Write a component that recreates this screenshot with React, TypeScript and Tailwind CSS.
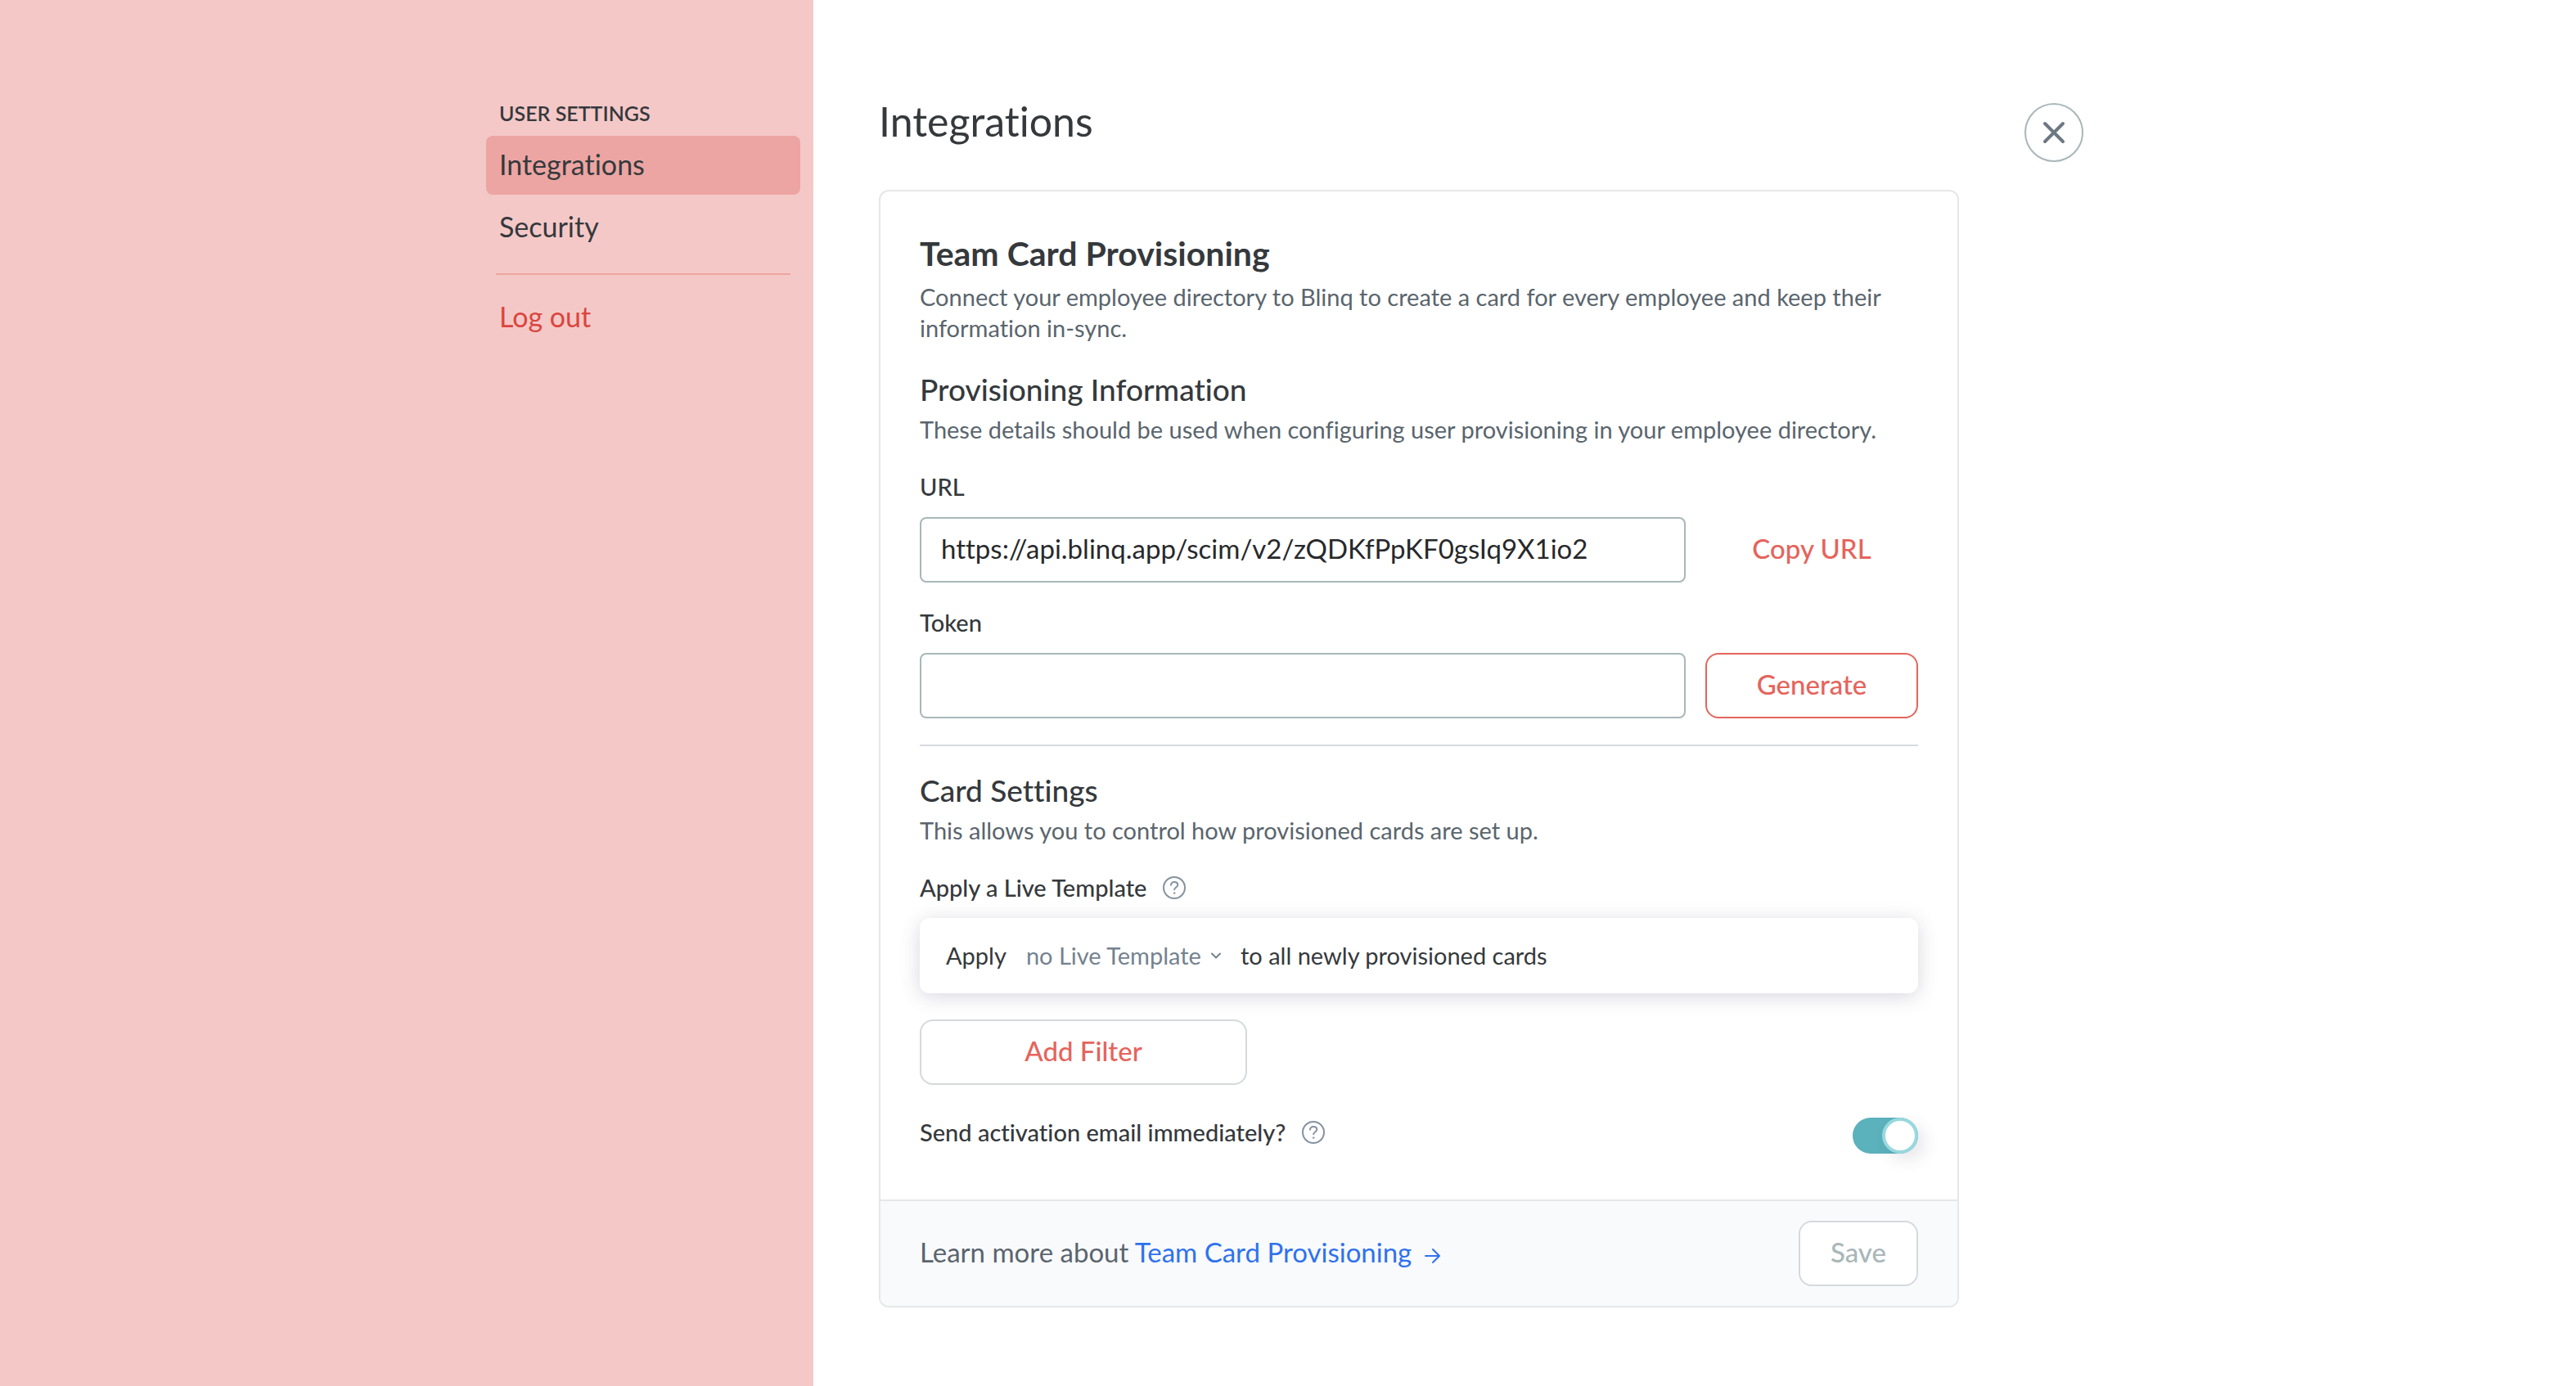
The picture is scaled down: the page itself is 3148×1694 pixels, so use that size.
import React, { useState } from "react";

function HelpIcon() {
  return (
    <svg className="h-7 w-7 shrink-0" viewBox="0 0 28 28" fill="none" stroke="#8492a0" strokeWidth="2" strokeLinecap="round" aria-hidden="true">
      <circle cx="14" cy="14" r="13" />
      <path d="M10 10.8c0-2.2 1.8-3.8 4.2-3.8s4.1 1.4 4.1 3.5c0 3-4.1 3-4.1 5.8" />
      <circle cx="14.1" cy="20.6" r="0.8" fill="#8492a0" strokeWidth="1" />
    </svg>
  );
}

function SectionHeading({ title, children }: { title: string; children: React.ReactNode }) {
  return (
    <>
      <h3 className="text-[37px] leading-11 font-medium">{title}</h3>
      <p className="mt-2 text-[29px] leading-[38px] text-[#5a656d]">{children}</p>
    </>
  );
}

const fieldClass =
  "h-20 min-w-0 flex-1 rounded-lg border-2 border-[#a9b7b9] bg-white px-6 pb-1 text-[33px] text-[#27292b] outline-none";

export default function App() {
  const [active, setActive] = useState("Integrations");
  const [token, setToken] = useState("");
  const [sendEmail, setSendEmail] = useState(true);

  return (
    <div className="flex min-h-screen bg-white font-['Lato','Liberation_Sans',sans-serif] text-[#35393c] [font-variant-ligatures:none]">
      <aside className="flex grow basis-[440px] justify-end bg-[#f5c8c8] pt-30 pr-4">
        <nav className="w-96" aria-label="User settings">
          <h2 className="mb-2.5 px-4 text-[25px] leading-9 font-semibold uppercase">User settings</h2>
          <ul className="flex flex-col gap-1">
            {["Integrations", "Security"].map((item) => (
              <li key={item}>
                <button
                  type="button"
                  onClick={() => setActive(item)}
                  className={`h-18 w-full rounded-lg px-4 pb-1 text-left text-[34px] ${active === item ? "bg-[#eca5a2]" : ""}`}
                >
                  {item}
                </button>
              </li>
            ))}
          </ul>
          <hr className="mx-3 mt-5 mb-4 border-t-2 border-[#efa5a0]" />
          <button type="button" className="h-18 w-full px-4 pb-1 text-left text-[34px] text-[#da463d]">
            Log out
          </button>
        </nav>
      </aside>

      <main className="flex grow basis-[1600px] items-start gap-20 pl-20">
        <div className="w-full max-w-[1320px] pt-29">
          <h1 className="text-[50px] leading-16">Integrations</h1>

          <section className="mt-13 overflow-hidden rounded-xl border-2 border-[#e6e7e9]">
            <div className="px-12 pt-13 pb-14">
              <h2 className="text-[41px] leading-12 font-bold">Team Card Provisioning</h2>
              <p className="mt-2.5 mb-8.5 text-[29px] leading-[38px] text-[#5a656d]">
                Connect your employee directory to Blinq to create a card for every employee and keep their information in-sync.
              </p>

              <SectionHeading title="Provisioning Information">
                These details should be used when configuring user provisioning in your employee directory.
              </SectionHeading>

              <label htmlFor="url" className="mt-8 mb-4.5 block text-[29px] leading-[38px] font-medium">URL</label>
              <div className="flex gap-6">
                <input id="url" readOnly value="https://api.blinq.app/scim/v2/zQDKfPpKF0gsIq9X1io2" className={fieldClass} />
                <button type="button" className="h-20 w-65 pb-0.5 text-[33px] font-medium text-[#e5645c]">Copy URL</button>
              </div>

              <label htmlFor="token" className="mt-7.5 mb-4.5 block text-[29px] leading-[38px] font-medium">Token</label>
              <div className="flex gap-6">
                <input id="token" value={token} onChange={(e) => setToken(e.target.value)} className={fieldClass} />
                <button type="button" className="h-20 w-65 rounded-2xl border-2 border-[#e5645c] pb-0.5 text-[33px] font-medium text-[#e5645c]">
                  Generate
                </button>
              </div>

              <hr className="my-8 border-t-2 border-[#d5dadd]" />

              <SectionHeading title="Card Settings">This allows you to control how provisioned cards are set up.</SectionHeading>

              <div className="mt-8 mb-4.5 flex items-center gap-5">
                <label htmlFor="template" className="text-[29px] leading-[38px] font-medium">Apply a Live Template</label>
                <HelpIcon />
              </div>
              <div className="flex h-23 items-center rounded-xl bg-white px-8 text-[29px] shadow-[0_4px_24px_rgba(60,60,90,0.2)]">
                <span>Apply</span>
                <span className="ml-6 flex items-center gap-3 text-[#74828f]">
                  <select id="template" className="field-sizing-content appearance-none bg-transparent outline-none">
                    <option>no Live Template</option>
                  </select>
                  <svg className="h-2 w-3" viewBox="0 0 12 8" fill="none" stroke="currentColor" strokeWidth="2" strokeLinecap="round" strokeLinejoin="round" aria-hidden="true">
                    <path d="M1 1.5 6 6.5 11 1.5" />
                  </svg>
                </span>
                <span className="ml-6">to all newly provisioned cards</span>
              </div>

              <button type="button" className="mt-8 h-20 w-100 rounded-2xl border-2 border-[#d5d9dc] pb-0.5 text-[33px] font-medium text-[#e5645c]">
                Add Filter
              </button>

              <div className="mt-10 flex items-start justify-between">
                <div className="flex items-center gap-5">
                  <label htmlFor="send-email" className="text-[29px] leading-9 font-medium">Send activation email immediately?</label>
                  <HelpIcon />
                </div>
                <span className="relative flex">
                  <input
                    id="send-email"
                    type="checkbox"
                    role="switch"
                    checked={sendEmail}
                    onChange={(e) => setSendEmail(e.target.checked)}
                    className="peer h-11 w-20 appearance-none rounded-full bg-[#c5cdd2] checked:bg-[#5bb1bc]"
                  />
                  <span className="pointer-events-none absolute top-0 left-0 size-11 rounded-full border-4 border-[#98d8de] bg-white shadow-[8px_8px_20px_rgba(60,60,90,0.12)] peer-checked:left-9" />
                </span>
              </div>
            </div>

            <footer className="flex items-center justify-between border-t-2 border-[#e6e7e9] bg-[#f9fafc] px-12 py-6">
              <p className="pb-1 text-[33px]/10 text-[#5a656d]">
                Learn more about{" "}
                <a href="#provisioning" className="text-[#2f72ee]">
                  Team Card Provisioning
                  <svg className="ml-4 inline h-5 w-5" viewBox="0 0 20 20" fill="none" stroke="currentColor" strokeWidth="2" strokeLinecap="round" strokeLinejoin="round" aria-hidden="true">
                    <path d="M1 10h17M10 2l8 8-8 8" />
                  </svg>
                </a>
              </p>
              <button type="button" className="h-20 w-[146px] rounded-2xl border-2 border-[#d5d9dc] bg-white pb-0.5 text-[33px] font-medium text-[#a9b7b9]">
                Save
              </button>
            </footer>
          </section>
        </div>

        <button type="button" aria-label="Close" className="mt-[126px] mr-10 flex size-18 shrink-0 items-center justify-center rounded-full border-2 border-[#a9b7b9] text-[#6c7884]">
          <svg className="size-7" viewBox="0 0 28 28" fill="none" stroke="currentColor" strokeWidth="4" strokeLinecap="round" aria-hidden="true">
            <path d="M3 3 25 25M25 3 3 25" />
          </svg>
        </button>
      </main>
    </div>
  );
}
